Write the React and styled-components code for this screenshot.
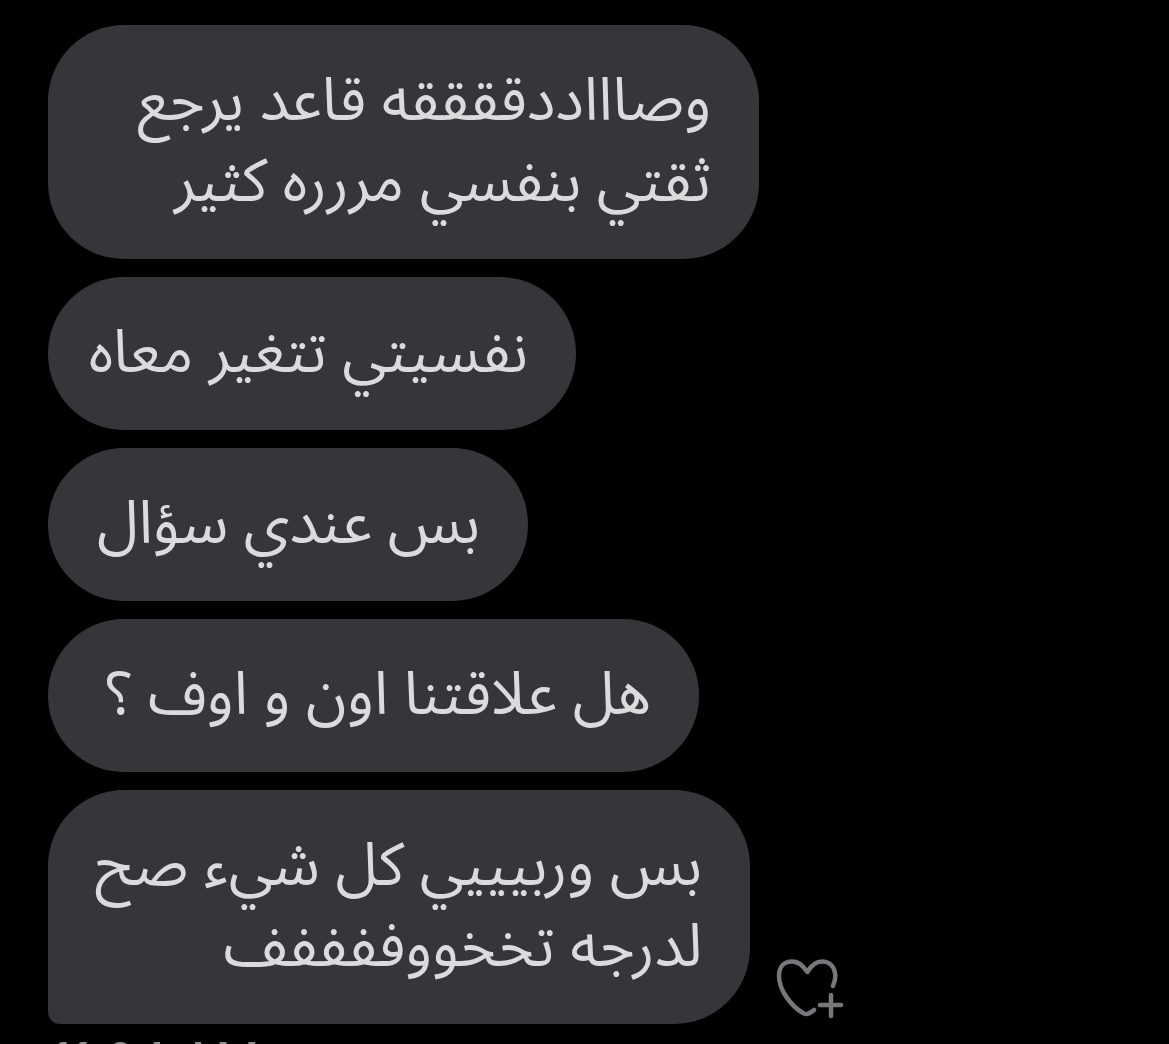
import React from 'react';
import styled, { createGlobalStyle } from 'styled-components';

const GlobalStyle = createGlobalStyle`
  *, *::before, *::after { box-sizing: border-box; }
  body {
    margin: 0;
    background: #000;
    overflow: hidden;
  }
`;

const Conversation = styled.main`
  height: 100vh;
  overflow: hidden;
  padding: 25px 48px 0;
  background: #000;
`;

const MessageList = styled.ol`
  display: flex;
  flex-direction: column;
  gap: 18px;
  margin: 0;
  padding: 0;
  list-style: none;
`;

const MessageRow = styled.li`
  display: flex;
  align-items: flex-end;
  gap: 24px;
`;

const Bubble = styled.p`
  width: ${({ $width }) => $width}px;
  max-width: 100%;
  margin: 0;
  padding: 36px 48px;
  border-radius: ${({ $last }) => ($last ? '76px 76px 76px 12px' : '76px')};
  background: #353639;
  color: #dadbdc;
  font-family: 'Noto Sans Arabic', 'DejaVu Sans', sans-serif;
  font-size: 60px;
  line-height: 81px;
  white-space: nowrap;
`;

const Line = styled.span`
  display: block;
`;

const ReactButton = styled.button`
  display: flex;
  padding: 0;
  border: 0;
  background: none;
  color: #77787c;
  cursor: pointer;
`;

const Timestamp = styled.time`
  display: block;
  margin-top: 9px;
  padding-left: 3px;
  color: #8e8e93;
  font-family: Inter, sans-serif;
  font-size: 49px;
  line-height: 56px;
`;

const messages = [
  { width: 711, lines: ['وصاااددققققه قاعد يرجع', 'ثقتي بنفسي مررره كثير'] },
  { width: 528, lines: ['نفسيتي تتغير معاه'] },
  { width: 480, lines: ['بس عندي سؤال'] },
  { width: 651, lines: ['هل علاقتنا اون و اوف ؟'] },
  { width: 702, lines: ['بس وربيييي كل شيء صح', 'لدرجه تخخووففففف'] },
];

function HeartPlusIcon() {
  return (
    <svg width="72" height="72" viewBox="0 0 72 72" fill="none" stroke="currentColor" strokeWidth="4.500" strokeLinecap="round" strokeLinejoin="round" aria-hidden="true">
      <path d="M59 34C61 29 62 25 61 21C60 14 55 9.500 48 9.500C41 9.500 37 14 33.300 20C29 14 25 9.500 18 9.500C10 9.500 5 15 5 24C5 38 17 54 29 61Q33 64 40 58" />
      <path d="M57 43V64M46 53H67" />
    </svg>
  );
}

export default function App() {
  return (
    <>
      <GlobalStyle />
      <Conversation>
        <MessageList>
          {messages.map(({ width, lines }, index) => {
            const last = index === messages.length - 1;
            return (
              <MessageRow key={lines[0]}>
                <Bubble dir="rtl" lang="ar" $width={width} $last={last}>
                  {lines.map((line) => <Line key={line}>{line}</Line>)}
                </Bubble>
                {last && (
                  <ReactButton type="button" aria-label="Add reaction">
                    <HeartPlusIcon />
                  </ReactButton>
                )}
              </MessageRow>
            );
          })}
        </MessageList>
        <Timestamp>11:04 AM</Timestamp>
      </Conversation>
    </>
  );
}
